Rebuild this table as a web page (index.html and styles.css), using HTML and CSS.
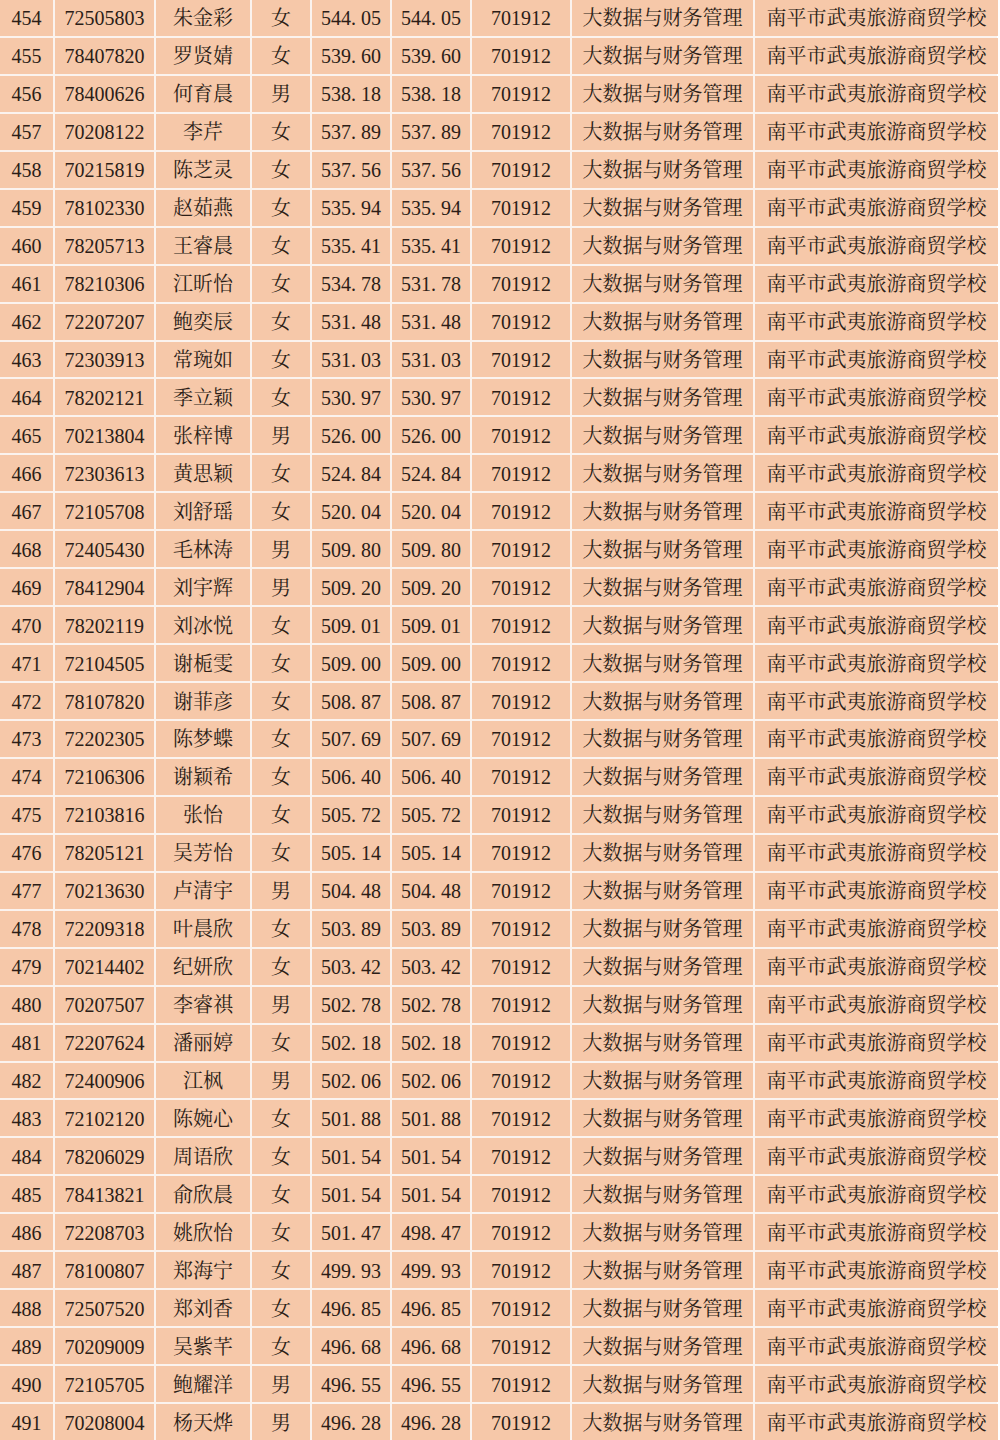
FILE: index.html
```html
<!DOCTYPE html>
<html lang="zh-CN">
<head>
<meta charset="utf-8">
<title>录取名单</title>
<link rel="stylesheet" href="styles.css">
</head>
<body>
<div class="sheet">
<div class="r"><div>454</div><div>72505803</div><div>朱金彩</div><div>女</div><div>544<span class="dot">.</span>05</div><div>544<span class="dot">.</span>05</div><div>701912</div><div>大数据与财务管理</div><div>南平市武夷旅游商贸学校</div></div>
<div class="r"><div>455</div><div>78407820</div><div>罗贤婧</div><div>女</div><div>539<span class="dot">.</span>60</div><div>539<span class="dot">.</span>60</div><div>701912</div><div>大数据与财务管理</div><div>南平市武夷旅游商贸学校</div></div>
<div class="r"><div>456</div><div>78400626</div><div>何育晨</div><div>男</div><div>538<span class="dot">.</span>18</div><div>538<span class="dot">.</span>18</div><div>701912</div><div>大数据与财务管理</div><div>南平市武夷旅游商贸学校</div></div>
<div class="r"><div>457</div><div>70208122</div><div>李芹</div><div>女</div><div>537<span class="dot">.</span>89</div><div>537<span class="dot">.</span>89</div><div>701912</div><div>大数据与财务管理</div><div>南平市武夷旅游商贸学校</div></div>
<div class="r"><div>458</div><div>70215819</div><div>陈芝灵</div><div>女</div><div>537<span class="dot">.</span>56</div><div>537<span class="dot">.</span>56</div><div>701912</div><div>大数据与财务管理</div><div>南平市武夷旅游商贸学校</div></div>
<div class="r"><div>459</div><div>78102330</div><div>赵茹燕</div><div>女</div><div>535<span class="dot">.</span>94</div><div>535<span class="dot">.</span>94</div><div>701912</div><div>大数据与财务管理</div><div>南平市武夷旅游商贸学校</div></div>
<div class="r"><div>460</div><div>78205713</div><div>王睿晨</div><div>女</div><div>535<span class="dot">.</span>41</div><div>535<span class="dot">.</span>41</div><div>701912</div><div>大数据与财务管理</div><div>南平市武夷旅游商贸学校</div></div>
<div class="r"><div>461</div><div>78210306</div><div>江昕怡</div><div>女</div><div>534<span class="dot">.</span>78</div><div>531<span class="dot">.</span>78</div><div>701912</div><div>大数据与财务管理</div><div>南平市武夷旅游商贸学校</div></div>
<div class="r"><div>462</div><div>72207207</div><div>鲍奕辰</div><div>女</div><div>531<span class="dot">.</span>48</div><div>531<span class="dot">.</span>48</div><div>701912</div><div>大数据与财务管理</div><div>南平市武夷旅游商贸学校</div></div>
<div class="r"><div>463</div><div>72303913</div><div>常琬如</div><div>女</div><div>531<span class="dot">.</span>03</div><div>531<span class="dot">.</span>03</div><div>701912</div><div>大数据与财务管理</div><div>南平市武夷旅游商贸学校</div></div>
<div class="r"><div>464</div><div>78202121</div><div>季立颖</div><div>女</div><div>530<span class="dot">.</span>97</div><div>530<span class="dot">.</span>97</div><div>701912</div><div>大数据与财务管理</div><div>南平市武夷旅游商贸学校</div></div>
<div class="r"><div>465</div><div>70213804</div><div>张梓博</div><div>男</div><div>526<span class="dot">.</span>00</div><div>526<span class="dot">.</span>00</div><div>701912</div><div>大数据与财务管理</div><div>南平市武夷旅游商贸学校</div></div>
<div class="r"><div>466</div><div>72303613</div><div>黄思颖</div><div>女</div><div>524<span class="dot">.</span>84</div><div>524<span class="dot">.</span>84</div><div>701912</div><div>大数据与财务管理</div><div>南平市武夷旅游商贸学校</div></div>
<div class="r"><div>467</div><div>72105708</div><div>刘舒瑶</div><div>女</div><div>520<span class="dot">.</span>04</div><div>520<span class="dot">.</span>04</div><div>701912</div><div>大数据与财务管理</div><div>南平市武夷旅游商贸学校</div></div>
<div class="r"><div>468</div><div>72405430</div><div>毛林涛</div><div>男</div><div>509<span class="dot">.</span>80</div><div>509<span class="dot">.</span>80</div><div>701912</div><div>大数据与财务管理</div><div>南平市武夷旅游商贸学校</div></div>
<div class="r"><div>469</div><div>78412904</div><div>刘宇辉</div><div>男</div><div>509<span class="dot">.</span>20</div><div>509<span class="dot">.</span>20</div><div>701912</div><div>大数据与财务管理</div><div>南平市武夷旅游商贸学校</div></div>
<div class="r"><div>470</div><div>78202119</div><div>刘冰悦</div><div>女</div><div>509<span class="dot">.</span>01</div><div>509<span class="dot">.</span>01</div><div>701912</div><div>大数据与财务管理</div><div>南平市武夷旅游商贸学校</div></div>
<div class="r"><div>471</div><div>72104505</div><div>谢栀雯</div><div>女</div><div>509<span class="dot">.</span>00</div><div>509<span class="dot">.</span>00</div><div>701912</div><div>大数据与财务管理</div><div>南平市武夷旅游商贸学校</div></div>
<div class="r"><div>472</div><div>78107820</div><div>谢菲彦</div><div>女</div><div>508<span class="dot">.</span>87</div><div>508<span class="dot">.</span>87</div><div>701912</div><div>大数据与财务管理</div><div>南平市武夷旅游商贸学校</div></div>
<div class="r"><div>473</div><div>72202305</div><div>陈梦蝶</div><div>女</div><div>507<span class="dot">.</span>69</div><div>507<span class="dot">.</span>69</div><div>701912</div><div>大数据与财务管理</div><div>南平市武夷旅游商贸学校</div></div>
<div class="r"><div>474</div><div>72106306</div><div>谢颖希</div><div>女</div><div>506<span class="dot">.</span>40</div><div>506<span class="dot">.</span>40</div><div>701912</div><div>大数据与财务管理</div><div>南平市武夷旅游商贸学校</div></div>
<div class="r"><div>475</div><div>72103816</div><div>张怡</div><div>女</div><div>505<span class="dot">.</span>72</div><div>505<span class="dot">.</span>72</div><div>701912</div><div>大数据与财务管理</div><div>南平市武夷旅游商贸学校</div></div>
<div class="r"><div>476</div><div>78205121</div><div>吴芳怡</div><div>女</div><div>505<span class="dot">.</span>14</div><div>505<span class="dot">.</span>14</div><div>701912</div><div>大数据与财务管理</div><div>南平市武夷旅游商贸学校</div></div>
<div class="r"><div>477</div><div>70213630</div><div>卢清宇</div><div>男</div><div>504<span class="dot">.</span>48</div><div>504<span class="dot">.</span>48</div><div>701912</div><div>大数据与财务管理</div><div>南平市武夷旅游商贸学校</div></div>
<div class="r"><div>478</div><div>72209318</div><div>叶晨欣</div><div>女</div><div>503<span class="dot">.</span>89</div><div>503<span class="dot">.</span>89</div><div>701912</div><div>大数据与财务管理</div><div>南平市武夷旅游商贸学校</div></div>
<div class="r"><div>479</div><div>70214402</div><div>纪妍欣</div><div>女</div><div>503<span class="dot">.</span>42</div><div>503<span class="dot">.</span>42</div><div>701912</div><div>大数据与财务管理</div><div>南平市武夷旅游商贸学校</div></div>
<div class="r"><div>480</div><div>70207507</div><div>李睿祺</div><div>男</div><div>502<span class="dot">.</span>78</div><div>502<span class="dot">.</span>78</div><div>701912</div><div>大数据与财务管理</div><div>南平市武夷旅游商贸学校</div></div>
<div class="r"><div>481</div><div>72207624</div><div>潘丽婷</div><div>女</div><div>502<span class="dot">.</span>18</div><div>502<span class="dot">.</span>18</div><div>701912</div><div>大数据与财务管理</div><div>南平市武夷旅游商贸学校</div></div>
<div class="r"><div>482</div><div>72400906</div><div>江枫</div><div>男</div><div>502<span class="dot">.</span>06</div><div>502<span class="dot">.</span>06</div><div>701912</div><div>大数据与财务管理</div><div>南平市武夷旅游商贸学校</div></div>
<div class="r"><div>483</div><div>72102120</div><div>陈婉心</div><div>女</div><div>501<span class="dot">.</span>88</div><div>501<span class="dot">.</span>88</div><div>701912</div><div>大数据与财务管理</div><div>南平市武夷旅游商贸学校</div></div>
<div class="r"><div>484</div><div>78206029</div><div>周语欣</div><div>女</div><div>501<span class="dot">.</span>54</div><div>501<span class="dot">.</span>54</div><div>701912</div><div>大数据与财务管理</div><div>南平市武夷旅游商贸学校</div></div>
<div class="r"><div>485</div><div>78413821</div><div>俞欣晨</div><div>女</div><div>501<span class="dot">.</span>54</div><div>501<span class="dot">.</span>54</div><div>701912</div><div>大数据与财务管理</div><div>南平市武夷旅游商贸学校</div></div>
<div class="r"><div>486</div><div>72208703</div><div>姚欣怡</div><div>女</div><div>501<span class="dot">.</span>47</div><div>498<span class="dot">.</span>47</div><div>701912</div><div>大数据与财务管理</div><div>南平市武夷旅游商贸学校</div></div>
<div class="r"><div>487</div><div>78100807</div><div>郑海宁</div><div>女</div><div>499<span class="dot">.</span>93</div><div>499<span class="dot">.</span>93</div><div>701912</div><div>大数据与财务管理</div><div>南平市武夷旅游商贸学校</div></div>
<div class="r"><div>488</div><div>72507520</div><div>郑刘香</div><div>女</div><div>496<span class="dot">.</span>85</div><div>496<span class="dot">.</span>85</div><div>701912</div><div>大数据与财务管理</div><div>南平市武夷旅游商贸学校</div></div>
<div class="r"><div>489</div><div>70209009</div><div>吴紫芊</div><div>女</div><div>496<span class="dot">.</span>68</div><div>496<span class="dot">.</span>68</div><div>701912</div><div>大数据与财务管理</div><div>南平市武夷旅游商贸学校</div></div>
<div class="r"><div>490</div><div>72105705</div><div>鲍耀洋</div><div>男</div><div>496<span class="dot">.</span>55</div><div>496<span class="dot">.</span>55</div><div>701912</div><div>大数据与财务管理</div><div>南平市武夷旅游商贸学校</div></div>
<div class="r"><div>491</div><div>70208004</div><div>杨天烨</div><div>男</div><div>496<span class="dot">.</span>28</div><div>496<span class="dot">.</span>28</div><div>701912</div><div>大数据与财务管理</div><div>南平市武夷旅游商贸学校</div></div>
</div>
</body>
</html>
```

FILE: styles.css
```css
html, body {
  margin: 0;
  padding: 0;
  background: #ffffff;
}

.sheet {
  display: grid;
  grid-template-columns: 53px 99px 94px 58px 78px 78px 98px 181px 243px;
  grid-auto-rows: 1fr;
  column-gap: 2px;
  row-gap: 2px;
  height: 1440px;
  width: 997px;
  background: #fbf3ee;
  font-family: "Liberation Serif", "Noto Serif CJK SC", "Noto Sans CJK SC", serif;
  font-size: 20px;
  color: #2b1d17;
}

.r {
  display: contents;
}

.r > div {
  background: #f6c8a9;
  display: flex;
  align-items: center;
  justify-content: center;
  white-space: nowrap;
  line-height: 1;
  padding-top: 1px;
}

.dot {
  display: inline-block;
  width: 0.5em;
  text-align: left;
}
```
